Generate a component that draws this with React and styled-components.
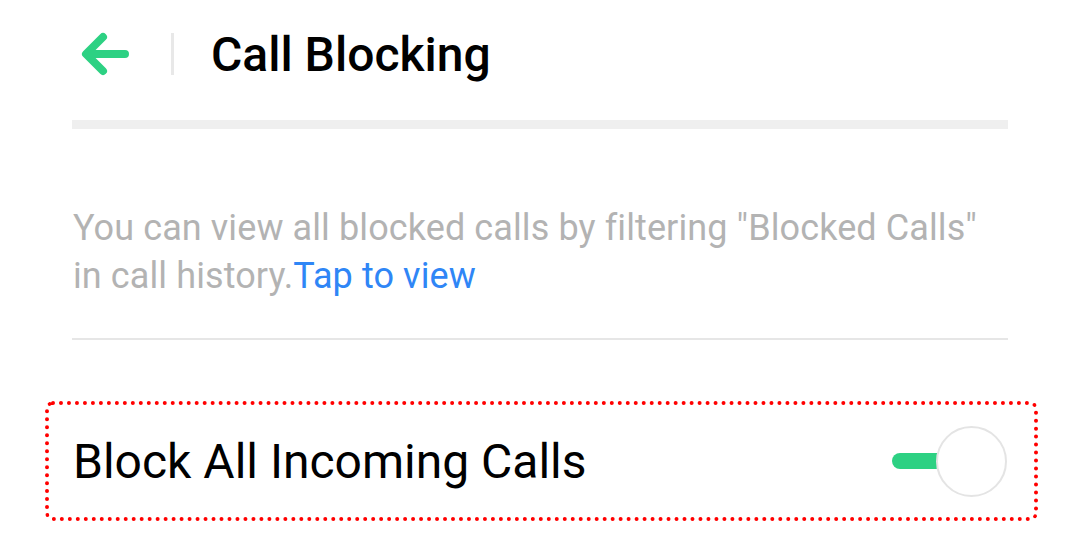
import styled, { createGlobalStyle } from "styled-components";

const GlobalStyle = createGlobalStyle`
  html, body {
    margin: 0;
    padding: 0;
    background: #ffffff;
  }
  body {
    font-family: Roboto, "Noto Sans", sans-serif;
    color: #000000;
  }
`;

const Page = styled.div`
  width: 1080px;
  height: 556px;
  overflow: hidden;
  padding: 0 72px;
  box-sizing: border-box;
`;

const Header = styled.div`
  height: 108px;
  display: flex;
  align-items: center;
  padding-left: 9px;
`;

const BackButton = styled.button`
  display: flex;
  align-items: center;
  border: none;
  background: none;
  padding: 0;
  cursor: pointer;
`;

const Separator = styled.span`
  width: 3px;
  height: 42px;
  background: #e8e8e8;
  margin: 0 37px 0 40px;
`;

const Title = styled.h1`
  margin: 0;
  font-size: 48px;
  font-weight: 500;
`;

const Band = styled.div`
  height: 9px;
  margin-top: 12px;
  background: #efefef;
`;

const Hint = styled.p`
  margin: 0;
  padding: 75px 20px 38px 1px;
  font-size: 36px;
  line-height: 48px;
  letter-spacing: 0.1px;
  color: #b3b3b3;
  border-bottom: 2px solid #e6e6e6;
`;

const Link = styled.a`
  color: #2f86f6;
  text-decoration: none;
`;

const Row = styled.div`
  margin: 61px -30px 0 -27px;
  height: 112px;
  border: 4px dotted #ff0000;
  border-radius: 8px;
  display: flex;
  align-items: center;
  justify-content: space-between;
  padding: 0 27px 0 24px;
`;

const Label = styled.span`
  font-size: 48px;
`;

const Switch = styled.div`
  position: relative;
  width: 115px;
  height: 71px;
`;

const Track = styled.div`
  position: absolute;
  left: 0;
  top: 27px;
  width: 56px;
  height: 16px;
  border-radius: 8px;
  background: #2dd183;
`;

const Knob = styled.div`
  position: absolute;
  right: 0;
  top: 0;
  width: 67px;
  height: 67px;
  border-radius: 50%;
  background: #ffffff;
  border: 2px solid #e4e4e4;
`;

const BackArrow = () => (
  <svg width="50" height="44" viewBox="0 0 50 44" fill="none">
    <path
      d="M44 22H6M22 5L5 22l17 17"
      stroke="#2dd183"
      strokeWidth="8"
      strokeLinecap="round"
      strokeLinejoin="round"
    />
  </svg>
);

export default function App() {
  return (
    <>
      <GlobalStyle />
      <Page>
        <Header>
          <BackButton aria-label="Back">
            <BackArrow />
          </BackButton>
          <Separator />
          <Title>Call Blocking</Title>
        </Header>
        <Band />
        <Hint>
          You can view all blocked calls by filtering "Blocked Calls" in call
          history.<Link href="#">Tap to view</Link>
        </Hint>
        <Row>
          <Label>Block All Incoming Calls</Label>
          <Switch>
            <Track />
            <Knob />
          </Switch>
        </Row>
      </Page>
    </>
  );
}
